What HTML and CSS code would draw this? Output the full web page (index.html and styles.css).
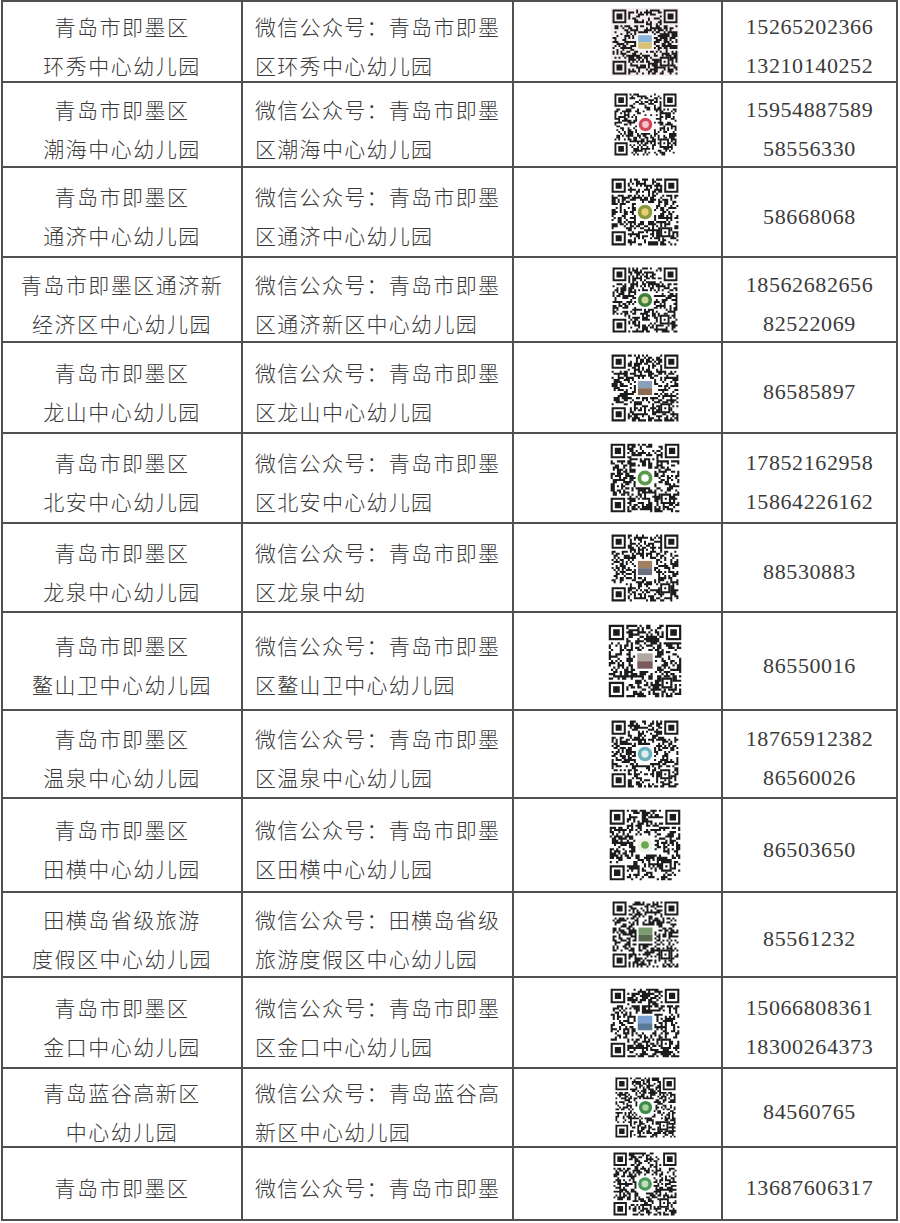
FILE: index.html
```html
<!DOCTYPE html>
<html lang="zh-CN">
<head>
<meta charset="utf-8">
<title>即墨区中心幼儿园联系方式</title>
<link rel="stylesheet" href="styles.css">
</head>
<body>
<div class="sheet">
  <div class="cell name">青岛市即墨区<br>环秀中心幼儿园</div>
  <div class="cell acct">微信公众号：青岛市即墨<br>区环秀中心幼儿园</div>
  <div class="cell code"><svg class="qr" width="68" height="68" data-seed="1" data-logo="photo" data-c1="#8bb6dc" data-c2="#d8c27a" data-bg="#f6eeee"></svg></div>
  <div class="cell tel">15265202366<br>13210140252</div>

  <div class="cell name">青岛市即墨区<br>潮海中心幼儿园</div>
  <div class="cell acct">微信公众号：青岛市即墨<br>区潮海中心幼儿园</div>
  <div class="cell code"><svg class="qr" width="65" height="65" data-seed="2" data-logo="circle" data-c1="#d2475a" data-c2="#f4c6cc"></svg></div>
  <div class="cell tel">15954887589<br>58556330</div>

  <div class="cell name">青岛市即墨区<br>通济中心幼儿园</div>
  <div class="cell acct">微信公众号：青岛市即墨<br>区通济中心幼儿园</div>
  <div class="cell code"><svg class="qr" width="70" height="70" data-seed="3" data-logo="circle" data-c1="#8a9a3a" data-c2="#e8d070"></svg></div>
  <div class="cell tel">58668068</div>

  <div class="cell name">青岛市即墨区通济新<br>经济区中心幼儿园</div>
  <div class="cell acct">微信公众号：青岛市即墨<br>区通济新区中心幼儿园</div>
  <div class="cell code"><svg class="qr" width="68" height="68" data-seed="4" data-logo="circle" data-c1="#3f7d3a" data-c2="#c8d890"></svg></div>
  <div class="cell tel">18562682656<br>82522069</div>

  <div class="cell name">青岛市即墨区<br>龙山中心幼儿园</div>
  <div class="cell acct">微信公众号：青岛市即墨<br>区龙山中心幼儿园</div>
  <div class="cell code"><svg class="qr" width="70" height="70" data-seed="5" data-logo="photo" data-c1="#8aa0b8" data-c2="#8a6a50"></svg></div>
  <div class="cell tel">86585897</div>

  <div class="cell name">青岛市即墨区<br>北安中心幼儿园</div>
  <div class="cell acct">微信公众号：青岛市即墨<br>区北安中心幼儿园</div>
  <div class="cell code"><svg class="qr" width="72" height="72" data-seed="6" data-logo="circle" data-c1="#5a9a4a" data-c2="#ffffff"></svg></div>
  <div class="cell tel">17852162958<br>15864226162</div>

  <div class="cell name">青岛市即墨区<br>龙泉中心幼儿园</div>
  <div class="cell acct">微信公众号：青岛市即墨<br>区龙泉中幼</div>
  <div class="cell code"><svg class="qr" width="70" height="70" data-seed="7" data-logo="photo" data-c1="#a08060" data-c2="#6a7080"></svg></div>
  <div class="cell tel">88530883</div>

  <div class="cell name">青岛市即墨区<br>鳌山卫中心幼儿园</div>
  <div class="cell acct">微信公众号：青岛市即墨<br>区鳌山卫中心幼儿园</div>
  <div class="cell code"><svg class="qr" width="76" height="76" data-seed="8" data-logo="photo" data-c1="#b0a8a0" data-c2="#7a5a5a"></svg></div>
  <div class="cell tel">86550016</div>

  <div class="cell name">青岛市即墨区<br>温泉中心幼儿园</div>
  <div class="cell acct">微信公众号：青岛市即墨<br>区温泉中心幼儿园</div>
  <div class="cell code"><svg class="qr" width="70" height="70" data-seed="9" data-logo="circle" data-c1="#6ab0c0" data-c2="#e0f0e8"></svg></div>
  <div class="cell tel">18765912382<br>86560026</div>

  <div class="cell name">青岛市即墨区<br>田横中心幼儿园</div>
  <div class="cell acct">微信公众号：青岛市即墨<br>区田横中心幼儿园</div>
  <div class="cell code"><svg class="qr" width="74" height="74" data-seed="10" data-logo="circle" data-c1="#eef5e8" data-c2="#6aa84f"></svg></div>
  <div class="cell tel">86503650</div>

  <div class="cell name">田横岛省级旅游<br>度假区中心幼儿园</div>
  <div class="cell acct">微信公众号：田横岛省级<br>旅游度假区中心幼儿园</div>
  <div class="cell code"><svg class="qr" width="69" height="69" data-seed="11" data-logo="photo" data-c1="#7a9a70" data-c2="#5a6a50"></svg></div>
  <div class="cell tel">85561232</div>

  <div class="cell name">青岛市即墨区<br>金口中心幼儿园</div>
  <div class="cell acct">微信公众号：青岛市即墨<br>区金口中心幼儿园</div>
  <div class="cell code"><svg class="qr" width="72" height="72" data-seed="12" data-logo="photo" data-c1="#7aa0d0" data-c2="#5a7a9a"></svg></div>
  <div class="cell tel">15066808361<br>18300264373</div>

  <div class="cell name">青岛蓝谷高新区<br>中心幼儿园</div>
  <div class="cell acct">微信公众号：青岛蓝谷高<br>新区中心幼儿园</div>
  <div class="cell code"><svg class="qr" width="63" height="63" data-seed="13" data-logo="circle" data-c1="#3d8a4a" data-c2="#a8d0a0"></svg></div>
  <div class="cell tel">84560765</div>

  <div class="cell name">青岛市即墨区</div>
  <div class="cell acct">微信公众号：青岛市即墨</div>
  <div class="cell code"><svg class="qr" width="66" height="66" data-seed="14" data-logo="circle" data-c1="#4a9a5a" data-c2="#c0e0c0"></svg></div>
  <div class="cell tel">13687606317</div>
</div>
<script src="qr.js"></script>
</body>
</html>
```

FILE: styles.css
```css
html, body {
  margin: 0;
  padding: 0;
  background: #ffffff;
}

.sheet {
  display: grid;
  grid-template-columns: 240px 271px 209px 175px;
  grid-template-rows: 81px 85px 90px 85px 91px 90px 89px 98px 88px 94px 85px 91px 79px 73px;
  width: max-content;
  margin-left: 1px;
  border-left: 2px solid #505050;
  border-top: 2px solid #505050;
}

.cell {
  box-sizing: border-box;
  border-right: 2px solid #505050;
  border-bottom: 2px solid #505050;
  display: flex;
  align-items: center;
  color: #3a3a3a;
}

.name,
.acct {
  font-family: "Noto Sans CJK SC", "Noto Sans", sans-serif;
  font-size: 21px;
  font-weight: 300;
  line-height: 39px;
  letter-spacing: 1.5px;
  padding-top: 8px;
}

.name {
  justify-content: center;
  text-align: center;
}

.acct {
  justify-content: flex-start;
  padding-left: 12px;
  letter-spacing: 1.3px;
}

.code {
  justify-content: center;
  padding-left: 55px;
}

.qr {
  display: block;
}

.tel {
  justify-content: center;
  text-align: center;
  font-family: "Liberation Serif", "Times New Roman", serif;
  font-size: 22px;
  line-height: 39px;
  letter-spacing: 0.6px;
  padding-top: 8px;
}
```

FILE: qr.js
```js
(function () {
  var NS = 'http://www.w3.org/2000/svg';
  function rng(seed) {
    return function () {
      seed |= 0;
      seed = (seed + 0x6D2B79F5) | 0;
      var t = Math.imul(seed ^ (seed >>> 15), 1 | seed);
      t = (t + Math.imul(t ^ (t >>> 7), 61 | t)) ^ t;
      return ((t ^ (t >>> 14)) >>> 0) / 4294967296;
    };
  }
  function el(name, attrs) {
    var e = document.createElementNS(NS, name);
    for (var k in attrs) e.setAttribute(k, attrs[k]);
    return e;
  }
  var N = 33;
  var L0 = 12, L1 = 21;
  var C = (L0 + L1) / 2;
  document.querySelectorAll('svg.qr').forEach(function (svg) {
    var r = rng(+svg.dataset.seed * 7919 + 13);
    svg.setAttribute('viewBox', '-0.8 -0.8 ' + (N + 1.6) + ' ' + (N + 1.6));
    svg.appendChild(el('rect', { x: -0.8, y: -0.8, width: N + 1.6, height: N + 1.6, fill: svg.dataset.bg || '#ffffff' }));
    function inFinder(x, y) {
      return (x < 8 && y < 8) || (x >= N - 8 && y < 8) || (x < 8 && y >= N - 8);
    }
    function inAlign(x, y) {
      return x >= N - 9 && x < N - 4 && y >= N - 9 && y < N - 4;
    }
    function inLogo(x, y) {
      return x >= L0 && x < L1 && y >= L0 && y < L1;
    }
    var d = '';
    for (var y = 0; y < N; y++) {
      for (var x = 0; x < N; x++) {
        if (inFinder(x, y) || inLogo(x, y) || inAlign(x, y)) continue;
        if (r() < 0.5) d += 'M' + x + ' ' + y + 'h1v1h-1z';
      }
    }
    svg.appendChild(el('path', { d: d, fill: '#1c1c1c' }));
    var f = '';
    [[0, 0], [N - 7, 0], [0, N - 7]].forEach(function (p) {
      var fx = p[0], fy = p[1];
      f += 'M' + fx + ' ' + fy + 'h7v7h-7z';
      f += 'M' + (fx + 1) + ' ' + (fy + 1) + 'v5h5v-5z';
      f += 'M' + (fx + 2) + ' ' + (fy + 2) + 'h3v3h-3z';
    });
    var ax = N - 9, ay = N - 9;
    f += 'M' + ax + ' ' + ay + 'h5v5h-5z';
    f += 'M' + (ax + 1) + ' ' + (ay + 1) + 'v3h3v-3z';
    f += 'M' + (ax + 2) + ' ' + (ay + 2) + 'h1v1h-1z';
    svg.appendChild(el('path', { d: f, fill: '#1c1c1c', 'fill-rule': 'evenodd' }));
    svg.appendChild(el('rect', { x: L0 + 0.3, y: L0 + 0.3, width: L1 - L0 - 0.6, height: L1 - L0 - 0.6, rx: 1, fill: '#ffffff' }));
    var c1 = svg.dataset.c1, c2 = svg.dataset.c2;
    if (svg.dataset.logo === 'photo') {
      svg.appendChild(el('rect', { x: L0 + 1, y: L0 + 1, width: L1 - L0 - 2, height: 3.6, fill: c1 }));
      svg.appendChild(el('rect', { x: L0 + 1, y: L0 + 4.6, width: L1 - L0 - 2, height: 3.4, fill: c2 }));
    } else {
      svg.appendChild(el('circle', { cx: C, cy: C, r: 3.6, fill: c1 }));
      svg.appendChild(el('circle', { cx: C, cy: C, r: 1.8, fill: c2 }));
    }
  });
})();
```
